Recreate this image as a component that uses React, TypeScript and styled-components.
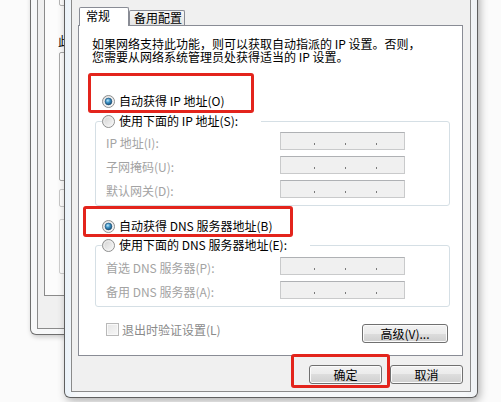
import React, { useId } from "react";
import styled, { createGlobalStyle } from "styled-components";

const Global = createGlobalStyle`
  html, body { margin: 0; padding: 0; background: #fbfbfb; }
  body {
    font-family: "Noto Sans CJK SC", "Noto Sans", sans-serif;
    font-size: 12px;
    color: #000;
  }
  * { box-sizing: border-box; }
`;

const Desktop = styled.div`
  position: relative;
  width: 501px;
  height: 402px;
  overflow: hidden;
  background: #fbfbfb;
`;

/* ---------- window behind ---------- */
const BackWindow = styled.div`
  position: absolute;
  left: 30px;
  top: -20px;
  width: 260px;
  height: 355px;
  display: flex;
  flex-direction: column;
  padding: 6px 6px 5px 6px;
  border: 1px solid #6f6f6f;
  border-top: none;
  border-radius: 0 0 6px 6px;
  background: #f7f8f9;
  box-shadow: 1px 2px 5px rgba(0, 0, 0, 0.2);
`;

const BackBody = styled.div`
  flex: 1;
  display: flex;
  flex-direction: column;
  border: 1px solid #8b8b8b;
  background: #f0f0f0;
  padding: 6px 6px 32px 6px;
`;

const BackPanel = styled.div`
  flex: 1;
  display: flex;
  flex-direction: column;
  border: 1px solid #8b8b8b;
  background: #fcfcfc;
  padding: 0 0 0 14px;
`;

const BackBox = styled.div<{ $h: number; $mt: number; $c: string }>`
  height: ${(p) => p.$h}px;
  margin-top: ${(p) => p.$mt}px;
  border: 1px solid ${(p) => p.$c};
  border-radius: 2px;
  background: #fff;
`;

const BackText = styled.div`
  margin-top: 28px;
  margin-left: -1px;
  height: 13px;
  line-height: 13px;
  white-space: nowrap;
`;

/* ---------- front dialog ---------- */
const Dialog = styled.div`
  position: absolute;
  left: 64px;
  top: -12px;
  width: 414px;
  height: 410px;
  display: flex;
  flex-direction: column;
  padding: 6px 6px 5px 6px;
  border: 1px solid #5f5f5f;
  border-top: none;
  border-radius: 0 0 6px 6px;
  background: linear-gradient(90deg, #eaf2f9 0%, #f6f8fa 3%, #f6f8fa 97%, #eef1f4 100%);
  box-shadow: 2px 3px 8px rgba(0, 0, 0, 0.3);
`;

const DialogBody = styled.div`
  flex: 1;
  display: flex;
  flex-direction: column;
  border: 1px solid #8a8a8a;
  background: #f0f0f0;
  padding: 12px 7px 0 6px;
`;

const TabStrip = styled.div`
  display: flex;
  align-items: flex-end;
  height: 18px;
  padding-left: 1px;
`;

const Tab = styled.div<{ $active?: boolean }>`
  position: relative;
  z-index: ${(p) => (p.$active ? 1 : 0)};
  width: ${(p) => (p.$active ? 50 : 56)}px;
  height: ${(p) => (p.$active ? 19 : 15)}px;
  margin-bottom: ${(p) => (p.$active ? -1 : 0)}px;
  padding: ${(p) => (p.$active ? "1px 0 0 6px" : "0 0 0 4px")};
  border: 1px solid #898c95;
  border-bottom: none;
  border-radius: 2px 2px 0 0;
  background: ${(p) => (p.$active ? "#fff" : "linear-gradient(#f6f6f6, #e4e4e4)")};
  line-height: 13px;
  white-space: nowrap;
`;

const Pane = styled.div`
  height: 331px;
  display: flex;
  flex-direction: column;
  border: 1px solid #898c95;
  background: #fff;
  padding: 11px 12px 0 16px;
`;

const Description = styled.div`
  display: flex;
  flex-direction: column;
  margin: 0 0 0 -3px;
`;

const DescLine = styled.span`
  display: block;
  height: 13px;
  line-height: 13px;
  white-space: nowrap;
`;

const RadioRow = styled.div<{ $mt: number }>`
  display: flex;
  align-items: center;
  gap: 4px;
  height: 14px;
  margin: ${(p) => p.$mt}px 0 0 7px;
  line-height: 14px;
  white-space: nowrap;
`;

const Group = styled.fieldset<{ $mt: number; $pt: number }>`
  margin: ${(p) => p.$mt}px 0 0 0;
  min-width: 0;
  border: 1px solid #d5dfe5;
  border-radius: 3px;
  padding: ${(p) => p.$pt}px 0 7px 0;
`;

const Legend = styled.legend`
  display: flex;
  align-items: center;
  gap: 4px;
  height: 14px;
  margin-left: 6px;
  padding: 0 23px 0 0;
  line-height: 14px;
  white-space: nowrap;
`;

const FieldList = styled.div`
  display: flex;
  flex-direction: column;
  gap: 6px;
`;

const FieldRow = styled.div`
  display: flex;
  align-items: center;
  height: 18px;
  padding-left: 10px;
`;

const FieldLabel = styled.span`
  width: 174px;
  padding-top: 2px;
  color: #a3a3a3;
  line-height: 13px;
  white-space: nowrap;
`;

const IpField = styled.div`
  display: flex;
  align-items: flex-start;
  width: 125px;
  height: 18px;
  padding: 10px 0 0 3px;
  border: 1px solid #c9cacb;
  border-top-color: #afb1b4;
  background: #f0f0f0;
`;

const Dot = styled.span`
  width: 1px;
  height: 2px;
  margin-left: 30px;
  background: #7a7a7a;
`;

const BottomRow = styled.div`
  display: flex;
  justify-content: space-between;
  align-items: flex-start;
  margin: 16px 2px 0 11px;
`;

const CheckRow = styled.label`
  display: flex;
  align-items: center;
  gap: 3px;
  height: 13px;
  color: #8a8a8a;
  line-height: 13px;
  white-space: nowrap;
`;

const CheckBox = styled.span`
  width: 13px;
  height: 13px;
  border: 1px solid #b9b9b9;
  background: linear-gradient(135deg, #e6e6e6, #f7f7f7);
  box-shadow: inset 0 0 0 1px #f9f9f9;
`;

const Button = styled.button<{ $w: number; $mt?: number }>`
  width: ${(p) => p.$w}px;
  height: 19px;
  margin: ${(p) => p.$mt ?? 0}px 0 0 0;
  padding: 0;
  border: 1px solid #707070;
  border-radius: 3px;
  background: linear-gradient(#f2f2f2 0%, #ebebeb 50%, #dddddd 50%, #cfcfcf 100%);
  box-shadow: inset 0 0 0 1px #fbfbfb;
  font-family: "Noto Sans CJK SC", "Noto Sans", sans-serif;
  font-size: 12px;
  line-height: 16px;
  color: #000;
  white-space: nowrap;
`;

const ButtonRow = styled.div`
  display: flex;
  justify-content: flex-end;
  gap: 8px;
  margin-top: 9px;
`;

const Highlight = styled.div<{ $x: number; $y: number; $w: number; $h: number }>`
  position: absolute;
  left: ${(p) => p.$x}px;
  top: ${(p) => p.$y}px;
  width: ${(p) => p.$w}px;
  height: ${(p) => p.$h}px;
  border: 3px solid #e3241c;
  border-radius: 3px;
  pointer-events: none;
`;

function Radio({ checked }: { checked?: boolean }) {
  const id = useId().replace(/:/g, "");
  return (
    <svg width="13" height="13" viewBox="0 0 13 13" style={{ flex: "none" }}>
      <defs>
        <linearGradient id={`bg${id}`} x1="0" y1="0" x2="1" y2="1">
          <stop offset="0" stopColor="#cfcfcf" />
          <stop offset="1" stopColor="#fbfbfb" />
        </linearGradient>
        <radialGradient id={`dot${id}`} cx="0.4" cy="0.35" r="0.7">
          <stop offset="0" stopColor="#bfe9fb" />
          <stop offset="0.45" stopColor="#3d93c6" />
          <stop offset="1" stopColor="#14476f" />
        </radialGradient>
      </defs>
      <circle cx="6.5" cy="6.5" r="6" fill={`url(#bg${id})`} stroke="#8e8f8f" />
      <circle cx="6.5" cy="6.5" r="4.6" fill="none" stroke="#f4f4f4" strokeWidth="0.8" />
      {checked && <circle cx="6.5" cy="6.5" r="3.4" fill={`url(#dot${id})`} stroke="#1d4e73" strokeWidth="0.6" />}
    </svg>
  );
}

function IpBox() {
  return (
    <IpField>
      <Dot />
      <Dot />
      <Dot />
    </IpField>
  );
}

export default function App() {
  return (
    <>
      <Global />
      <Desktop>
        <BackWindow>
          <BackBody>
            <BackPanel>
              <BackBox $h={12} $mt={0} $c="#b5b5b5" />
              <BackText>此</BackText>
              <BackBox $h={129} $mt={5} $c="#a9a9a9" />
              <BackBox $h={18} $mt={8} $c="#c8c8c8" />
              <BackBox $h={55} $mt={12} $c="#d0d0d0" />
            </BackPanel>
          </BackBody>
        </BackWindow>

        <Dialog>
          <DialogBody>
            <TabStrip>
              <Tab $active>常规</Tab>
              <Tab>备用配置</Tab>
            </TabStrip>
            <Pane>
              <Description>
                <DescLine>如果网络支持此功能，则可以获取自动指派的 IP 设置。否则，</DescLine>
                <DescLine>您需要从网络系统管理员处获得适当的 IP 设置。</DescLine>
              </Description>

              <RadioRow $mt={31}>
                <Radio checked />
                <span>自动获得 IP 地址(O)</span>
              </RadioRow>

              <Group $mt={6} $pt={4}>
                <Legend>
                  <Radio />
                  <span>使用下面的 IP 地址(S):</span>
                </Legend>
                <FieldList>
                  <FieldRow>
                    <FieldLabel>IP 地址(I):</FieldLabel>
                    <IpBox />
                  </FieldRow>
                  <FieldRow>
                    <FieldLabel>子网掩码(U):</FieldLabel>
                    <IpBox />
                  </FieldRow>
                  <FieldRow>
                    <FieldLabel>默认网关(D):</FieldLabel>
                    <IpBox />
                  </FieldRow>
                </FieldList>
              </Group>

              <RadioRow $mt={13}>
                <Radio checked />
                <span>自动获得 DNS 服务器地址(B)</span>
              </RadioRow>

              <Group $mt={5} $pt={5}>
                <Legend>
                  <Radio />
                  <span>使用下面的 DNS 服务器地址(E):</span>
                </Legend>
                <FieldList>
                  <FieldRow>
                    <FieldLabel>首选 DNS 服务器(P):</FieldLabel>
                    <IpBox />
                  </FieldRow>
                  <FieldRow>
                    <FieldLabel>备用 DNS 服务器(A):</FieldLabel>
                    <IpBox />
                  </FieldRow>
                </FieldList>
              </Group>

              <BottomRow>
                <CheckRow>
                  <CheckBox />
                  <span>退出时验证设置(L)</span>
                </CheckRow>
                <Button $w={86} $mt={1}>高级(V)...</Button>
              </BottomRow>
            </Pane>
            <ButtonRow>
              <Button $w={73}>确定</Button>
              <Button $w={73}>取消</Button>
            </ButtonRow>
          </DialogBody>
        </Dialog>

        <Highlight $x={88} $y={73} $w={166} $h={40} />
        <Highlight $x={83} $y={206} $w={210} $h={31} />
        <Highlight $x={291} $y={354} $w={99} $h={34} />
      </Desktop>
    </>
  );
}
